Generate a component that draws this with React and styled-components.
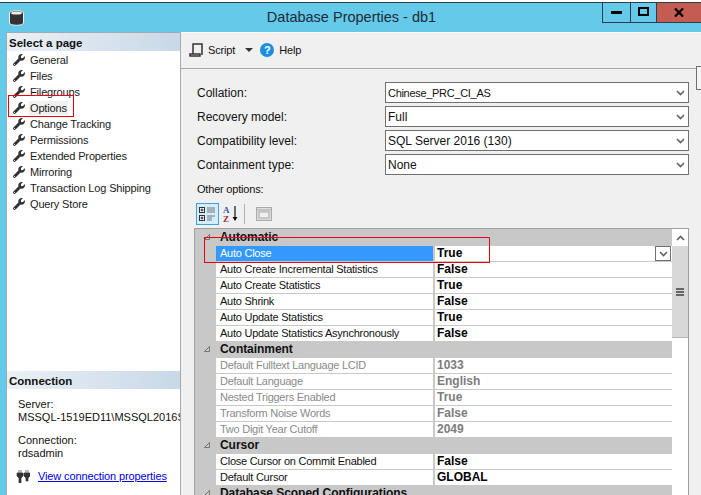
import React from 'react';
import styled, { createGlobalStyle } from 'styled-components';
import { FaWrench } from 'react-icons/fa';

const pages = ['General', 'Files', 'Filegroups', 'Options', 'Change Tracking', 'Permissions', 'Extended Properties', 'Mirroring', 'Transaction Log Shipping', 'Query Store'];

const fields = [
  ['Collation:', 'Chinese_PRC_CI_AS', true],
  ['Recovery model:', 'Full'],
  ['Compatibility level:', 'SQL Server 2016 (130)'],
  ['Containment type:', 'None'],
];

const groups = [
  { name: 'Automatic', rows: [
    ['Auto Close', 'True'],
    ['Auto Create Incremental Statistics', 'False'],
    ['Auto Create Statistics', 'True'],
    ['Auto Shrink', 'False'],
    ['Auto Update Statistics', 'True'],
    ['Auto Update Statistics Asynchronously', 'False'],
  ] },
  { name: 'Containment', muted: true, rows: [
    ['Default Fulltext Language LCID', '1033'],
    ['Default Language', 'English'],
    ['Nested Triggers Enabled', 'True'],
    ['Transform Noise Words', 'False'],
    ['Two Digit Year Cutoff', '2049'],
  ] },
  { name: 'Cursor', rows: [
    ['Close Cursor on Commit Enabled', 'False'],
    ['Default Cursor', 'GLOBAL'],
  ] },
  { name: 'Database Scoped Configurations', rows: [] },
];

const Global = createGlobalStyle`
  html, body { margin: 0; padding: 0; background: #fff; }
  body { font-family: "Liberation Sans", Arial, sans-serif; font-size: 12px; color: #111; }
`;

const Win = styled.div`
  position: relative;
  width: 701px;
  height: 495px;
  overflow: hidden;
  padding-top: 2px;
  box-sizing: border-box;
  background: #fff;
`;

const TitleBar = styled.div`
  position: relative;
  height: 30px;
  border-top: 1px solid #2c3e4a;
  box-sizing: border-box;
  background: #65c9ea;
  display: flex;
  justify-content: center;
  align-items: center;
  padding: 0 0 1px 2px;
  font-size: 14.5px;
  color: #1c2c36;
`;

const DbIcon = styled.svg`
  position: absolute;
  left: 9px;
  top: 7px;
`;

const Caption = styled.div`
  position: absolute;
  right: 0;
  top: 0;
  display: flex;
  height: 20px;
`;

const CapBtn = styled.div`
  width: ${p => p.$w}px;
  box-sizing: border-box;
  border: 1px solid #2c3e4a;
  border-top: none;
  border-left-width: ${p => (p.$first ? 1 : 0)}px;
  border-right-width: ${p => (p.$close ? 0 : 1)}px;
  background: ${p => (p.$close ? '#c45c52' : '#65c9ea')};
  display: flex;
  align-items: center;
  justify-content: center;
`;

const Body = styled.div`
  display: flex;
  height: 463px;
  background: #65c9ea;
  padding-left: 6px;
`;

const Side = styled.div`
  width: 175px;
  flex: none;
  box-sizing: border-box;
  background: #fff;
  border: 1px solid #a3a9ae;
  border-bottom: none;
  display: flex;
  flex-direction: column;
`;

const SideHead = styled.div`
  height: 18px;
  line-height: 20px;
  padding-left: 2px;
  font-weight: bold;
  font-size: 11.5px;
  background: linear-gradient(90deg, #ebf0f5, #c8d8e8);
  color: #111;
`;

const PageList = styled.div`
  flex: 1;
  padding-top: 1px;
`;

const PageItem = styled.div`
  height: 16px;
  display: flex;
  align-items: center;
  padding-left: 6px;
  font-size: 11px;
  letter-spacing: -0.15px;
  color: #1a1a1a;
  svg { color: #333; margin-right: 4px; flex: none; }
`;

const PageName = styled.span`
  background: ${p => (p.$active ? '#f0f0f0' : 'transparent')};
  padding: 1px 1px;
`;

const ConnBox = styled.div`
  height: 106px;
  flex: none;
  box-sizing: border-box;
  padding: 9px 0 0 11px;
  overflow: hidden;
  font-size: 11px;
  line-height: 13px;
  white-space: nowrap;
`;

const ConnGap = styled.div`
  height: 10px;
`;

const LinkRow = styled.div`
  display: flex;
  align-items: center;
  gap: 8px;
  margin: 10px 0 0 -2px;
  letter-spacing: -0.12px;
`;

const Link = styled.a`
  color: #0000e0;
  text-decoration: underline;
`;

const Main = styled.div`
  flex: 1;
  background: #f0f0f0;
  border-top: 1px solid #fff;
  display: flex;
  flex-direction: column;
  min-width: 0;
`;

const ToolBar = styled.div`
  height: 36px;
  flex: none;
  box-sizing: border-box;
  border-bottom: 1px solid #a8a8a8;
  display: flex;
  align-items: center;
  padding: 0 0 1px 8px;
  font-size: 11px;
  letter-spacing: -0.15px;
`;

const Arrow = styled.span`
  width: 0;
  height: 0;
  border-left: 4px solid transparent;
  border-right: 4px solid transparent;
  border-top: 4px solid #333;
  margin: 0 7px 0 10px;
`;

const HelpDot = styled.span`
  width: 14px;
  height: 14px;
  border-radius: 50%;
  background: #1a8ee0;
  color: #fff;
  font-weight: bold;
  font-size: 11px;
  line-height: 14px;
  text-align: center;
  margin-right: 5px;
`;

const Form = styled.div`
  padding: 13px 12px 0 16px;
  display: flex;
  flex-direction: column;
  gap: 3px;
`;

const FieldRow = styled.div`
  display: grid;
  grid-template-columns: 188px 1fr;
  align-items: center;
  font-size: 12px;
`;

const Select = styled.div`
  height: 21px;
  box-sizing: border-box;
  border: 1px solid #707070;
  background: #fff;
  display: flex;
  align-items: center;
  justify-content: space-between;
  padding: 0 3px 0 2px;
`;

const SelectValue = styled.span`
  font-size: ${p => (p.$tight ? 11 : 12)}px;
  letter-spacing: ${p => (p.$tight ? -0.3 : 0)}px;
`;

const OtherLabel = styled.div`
  margin: 7px 0 0 16px;
  line-height: 15px;
  font-size: 11px;
  letter-spacing: -0.2px;
`;

const GridBar = styled.div`
  margin: 5px 0 0 15px;
  height: 23px;
  display: flex;
  align-items: center;
`;

const BarBtn = styled.div`
  width: 23px;
  height: 22px;
  box-sizing: border-box;
  border: ${p => (p.$on ? '1px solid #3fa3e0' : '1px solid transparent')};
  background: ${p => (p.$on ? '#d5ecfa' : 'transparent')};
  display: flex;
  align-items: center;
  justify-content: center;
`;

const BarSep = styled.div`
  width: 1px;
  height: 20px;
  background: #b0b0b0;
  margin: 0 7px 0 2px;
`;

const Grid = styled.div`
  margin: 3px 12px 0 13px;
  flex: 1;
  min-height: 0;
  box-sizing: border-box;
  border: 1px solid #a0a0a0;
  border-bottom: none;
  display: flex;
  background: #c8c8c8;
  overflow: hidden;
`;

const Rows = styled.div`
  flex: 1;
  min-width: 0;
  padding-top: 1px;
`;

const GroupRow = styled.div`
  height: 16px;
  box-sizing: border-box;
  padding-bottom: 2px;
  display: flex;
  align-items: center;
  font-weight: bold;
  font-size: 12px;
  letter-spacing: -0.05px;
  background: #c8c8c8;
  color: #111;
`;

const Toggle = styled.svg`
  margin: 0 10px 0 9px;
  width: 6px;
  height: 6px;
  flex: none;
`;

const PropRow = styled.div`
  position: relative;
  height: 16px;
  box-sizing: border-box;
  margin-left: 21px;
  display: grid;
  grid-template-columns: 217px 1fr;
  background: #fff;
  border-bottom: 1px solid #c8c8c8;
  line-height: 15px;
`;

const PropName = styled.div`
  padding-left: 4px;
  white-space: nowrap;
  overflow: hidden;
  font-size: 11px;
  letter-spacing: -0.25px;
  background: ${p => (p.$sel ? '#3399ff' : '#fff')};
  color: ${p => (p.$sel ? '#fff' : p.$muted ? '#8a8a8a' : '#111')};
`;

const PropValue = styled.div`
  border-left: 2px solid #c8c8c8;
  padding-left: 2px;
  font-weight: bold;
  font-size: 12px;
  color: ${p => (p.$muted ? '#7c7c7c' : '#000')};
`;

const RowDrop = styled.div`
  position: absolute;
  right: 1px;
  top: 0;
  width: 16px;
  height: 15px;
  box-sizing: border-box;
  border: 1px solid #707070;
  background: #fff;
  display: flex;
  align-items: center;
  justify-content: center;
`;

const Scroll = styled.div`
  width: 16px;
  flex: none;
  background: #fff;
  display: flex;
  flex-direction: column;
`;

const ScrollBtn = styled.div`
  height: 17px;
  display: flex;
  align-items: center;
  justify-content: center;
`;

const Thumb = styled.div`
  height: 92px;
  background: #d8d8d8;
  border-bottom: 1px solid #b5b5b5;
  box-sizing: border-box;
  display: flex;
  align-items: center;
  justify-content: center;
`;

const Grip = styled.div`
  width: 8px;
  height: 8px;
  background: repeating-linear-gradient(#666 0 2px, transparent 2px 3px);
`;

const EdgeTab = styled.div`
  position: absolute;
  left: 696px;
  top: 66px;
  width: 8px;
  height: 24px;
  box-sizing: border-box;
  border: 1px solid #707070;
  background: #f4f4f4;
`;

const RedBox = styled.div`
  position: absolute;
  left: ${p => p.$x}px;
  top: ${p => p.$y}px;
  width: ${p => p.$w}px;
  height: ${p => p.$h}px;
  box-sizing: border-box;
  border: 1px solid #e8000f;
`;

const Chevron = ({ up }) => (
  <svg width="9" height="6" viewBox="0 0 9 6">
    <path d={up ? 'M1 5L4.5 1.5L8 5' : 'M1 1L4.5 4.5L8 1'} fill="none" stroke="#606060" strokeWidth="1.6" />
  </svg>
);

export default function App() {
  return (
    <Win>
      <Global />
      <TitleBar>
        <DbIcon width="15" height="16" viewBox="0 0 15 16">
          <path d="M0.5 3C0.5 0 14.5 0 14.5 3V13C14.5 16 0.5 16 0.5 13Z" fill="#333" stroke="#eee" strokeWidth="1" />
          <ellipse cx="7.5" cy="3" rx="5.5" ry="1.6" fill="#eee" />
        </DbIcon>
        Database Properties - db1
        <Caption>
          <CapBtn $w={29} $first>
            <svg width="11" height="3"><rect width="11" height="3" y="0" fill="#000" /></svg>
          </CapBtn>
          <CapBtn $w={26}>
            <svg width="11" height="9" style={{ marginTop: -3 }}><rect x="1" y="1" width="9" height="7" fill="none" stroke="#000" strokeWidth="2" /></svg>
          </CapBtn>
          <CapBtn $w={44} $close>
            <svg width="10" height="9" viewBox="0 0 10 9"><path d="M1 0.5L9 8.5M9 0.5L1 8.5" stroke="#000" strokeWidth="2.2" /></svg>
          </CapBtn>
        </Caption>
      </TitleBar>
      <Body>
        <Side>
          <SideHead>Select a page</SideHead>
          <PageList>
            {pages.map(name => (
              <PageItem key={name}>
                <FaWrench size={12} />
                <PageName $active={name === 'Options'}>{name}</PageName>
              </PageItem>
            ))}
          </PageList>
          <SideHead>Connection</SideHead>
          <ConnBox>
            <div>Server:</div>
            <div>MSSQL-1519ED11\MSSQL2016STD</div>
            <ConnGap />
            <div>Connection:</div>
            <div>rdsadmin</div>
            <LinkRow>
              <svg width="14" height="13" viewBox="0 0 14 13">
                <path d="M3 0V3M5 0V3M10 0V3M12 0V3M1 3H7V6L5 8V13H3V8L1 6ZM8 3H14V6L12 8V11H10V8L8 6Z" fill="#333" stroke="#333" strokeWidth="0.7" />
              </svg>
              <Link>View connection properties</Link>
            </LinkRow>
          </ConnBox>
        </Side>
        <Main>
          <ToolBar>
            <svg width="15" height="14" viewBox="0 0 15 14" style={{ marginRight: 4 }}>
              <path d="M4 11V1H13V12M1 11V13H11V11Z" fill="none" stroke="#333" strokeWidth="1.5" />
            </svg>
            Script
            <Arrow />
            <HelpDot>?</HelpDot>
            Help
          </ToolBar>
          <Form>
            {fields.map(([label, value, tight]) => (
              <FieldRow key={label}>
                <span>{label}</span>
                <Select>
                  <SelectValue $tight={tight}>{value}</SelectValue>
                  <Chevron />
                </Select>
              </FieldRow>
            ))}
          </Form>
          <OtherLabel>Other options:</OtherLabel>
          <GridBar>
            <BarBtn $on>
              <svg width="17" height="16" viewBox="0 0 17 16">
                <rect x="0.5" y="1.5" width="5" height="5" fill="#fff" stroke="#333" />
                <rect x="0.5" y="9.5" width="5" height="5" fill="#fff" stroke="#333" />
                <path d="M1.5 4H4.5M3 2.5V5.5M1.5 12H4.5M3 10.5V13.5" stroke="#222" />
                <path d="M8 2H16M8 4H16M8 6H16M8 10H16M8 12H13M8 14H13" stroke="#777" />
              </svg>
            </BarBtn>
            <BarBtn>
              <svg width="17" height="18" viewBox="0 0 17 18">
                <text x="1" y="8" fontSize="9" fontWeight="bold" fontFamily="Liberation Serif" fill="#3355aa">A</text>
                <text x="1" y="17" fontSize="9" fontWeight="bold" fontFamily="Liberation Serif" fill="#993333">Z</text>
                <path d="M13 1V15" stroke="#111" strokeWidth="1.2" />
                <path d="M10.5 12L13 16L15.5 12Z" fill="#111" />
              </svg>
            </BarBtn>
            <BarSep />
            <BarBtn>
              <svg width="16" height="14" viewBox="0 0 16 14">
                <rect x="0.5" y="0.5" width="15" height="13" fill="#dcdcdc" stroke="#aaa" />
                <rect x="3" y="5" width="10" height="6" fill="#eee" stroke="#aaa" />
                <path d="M1 3H15" stroke="#aaa" />
              </svg>
            </BarBtn>
          </GridBar>
          <Grid>
            <Rows>
              {groups.map(group => (
                <React.Fragment key={group.name}>
                  <GroupRow>
                    <Toggle viewBox="0 0 7 7"><path d="M6.5 0.5V6.5H0.5Z" fill="none" stroke="#666" /></Toggle>
                    <span>{group.name}</span>
                  </GroupRow>
                  {group.rows.map(([name, value]) => (
                    <PropRow key={name}>
                      <PropName $sel={name === 'Auto Close'} $muted={group.muted}>{name}</PropName>
                      <PropValue $muted={group.muted}>{value}</PropValue>
                      {name === 'Auto Close' && <RowDrop><Chevron /></RowDrop>}
                    </PropRow>
                  ))}
                </React.Fragment>
              ))}
            </Rows>
            <Scroll>
              <ScrollBtn><Chevron up /></ScrollBtn>
              <Thumb><Grip /></Thumb>
            </Scroll>
          </Grid>
        </Main>
      </Body>
      <EdgeTab />
      <RedBox $x={8} $y={95} $w={66} $h={22} />
      <RedBox $x={204} $y={237} $w={286} $h={26} />
    </Win>
  );
}
